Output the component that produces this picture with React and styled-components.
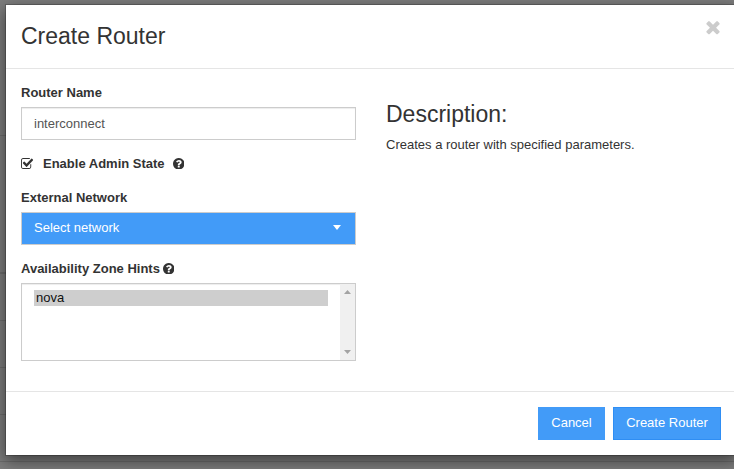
import React from "react";
import styled, { createGlobalStyle } from "styled-components";

const GlobalStyle = createGlobalStyle`
  * { box-sizing: border-box; }
  body {
    margin: 0;
    overflow: hidden;
    color: #333;
    font: 13px/18px "Liberation Sans", Arial, sans-serif;
  }
`;

const Screen = styled.div`
  display: grid;
  width: 734px;
  height: 469px;
  overflow: hidden;
  grid-template: 469px / 734px;
`;

const Backdrop = styled.div`
  grid-area: 1 / 1;
  background: #7d7d7d;
`;

const BackdropRow = styled.div`
  height: ${({ $height }) => $height}px;
  border-bottom: ${({ $thick }) => ($thick ? 2 : 1)}px solid #6d6d6d;
`;

const Modal = styled.section`
  grid-area: 1 / 1;
  position: relative;
  display: flex;
  flex-direction: column;
  width: 732px;
  height: 452px;
  margin: 4px 0 0 5px;
  background: #fff;
  background-clip: padding-box;
  border: 1px solid rgba(0, 0, 0, 0.2);
  box-shadow: 0 5px 15px rgba(0, 0, 0, 0.5);
`;

const Header = styled.header`
  display: flex;
  justify-content: space-between;
  height: 64px;
  padding: 18px 15px 0;
  border-bottom: 1px solid #e5e5e5;
`;

const Title = styled.h3`
  margin: 0;
  font-size: 23px;
  font-weight: 400;
  line-height: 26px;
`;

const CloseButton = styled.button`
  display: flex;
  width: 20px;
  height: 20px;
  margin: -6px -2px 0 0;
  padding: 0;
  border: 0;
  background: none;
  color: #ccc;
`;

const Body = styled.div`
  display: grid;
  grid-template-columns: 335px 1fr;
  column-gap: 30px;
  flex: 1;
  padding: 15px;
`;

const Form = styled.div`
  display: flex;
  flex-direction: column;
`;

const Label = styled.label`
  display: flex;
  align-items: center;
  gap: ${({ $gap }) => $gap || 0}px;
  height: 18px;
  margin-bottom: 5px;
  font-weight: 700;
  white-space: nowrap;
`;

const Field = styled.div`
  margin-bottom: 15px;
`;

const CheckField = styled.div`
  margin-bottom: 11px;
`;

const CheckText = styled.span`
  margin: 0 8px 0 9px;
`;

const Input = styled.input`
  display: block;
  width: 100%;
  height: 33px;
  padding: 6px 12px;
  border: 1px solid #ccc;
  border-radius: 0;
  color: #555;
  font: inherit;
  box-shadow: inset 0 1px 1px rgba(0, 0, 0, 0.075);
  outline: 0;
`;

const Select = styled.div`
  display: flex;
  justify-content: space-between;
  height: 33px;
  padding: 6px 14px 6px 12px;
  border: 1px solid #ccc;
  background: #429bf8;
  color: #fff;
`;

const Arrow = styled.span`
  width: 0;
  height: 0;
  border: solid transparent;
  border-width: ${({ $up, $half, $size }) => ($up ? `0 ${$half}px ${$size}px` : `${$size}px ${$half}px 0`)};
  border-${({ $up }) => ($up ? "bottom" : "top")}-color: ${({ $color }) => $color};
`;

const Caret = styled(Arrow)`
  margin-top: 6px;
`;

const ScrollArrow = styled.svg`
  display: block;
  width: 7px;
  height: 4px;
  fill: #a3a3a3;
`;

const ListBox = styled.div`
  display: flex;
  height: 78px;
  border: 1px solid #ccc;
  box-shadow: inset 0 1px 1px rgba(0, 0, 0, 0.075);
`;

const Options = styled.div`
  flex: 1;
  padding: 6px 12px;
`;

const Option = styled.div`
  height: 16px;
  padding: 0 2px;
  background: #cecece;
  color: #111;
  line-height: 16px;
`;

const Scrollbar = styled.div`
  display: flex;
  flex-direction: column;
  justify-content: space-between;
  align-items: center;
  width: 15px;
  padding: 6px 0;
  background: #f0f0f0;
`;

const Description = styled.div`
  padding-top: 17px;
`;

const DescriptionTitle = styled(Title)`
  margin-bottom: 9px;
`;

const Text = styled.p`
  margin: 0;
`;

const Footer = styled.footer`
  display: flex;
  justify-content: flex-end;
  gap: 8px;
  height: 64px;
  padding: 15px 15px 0;
  border-top: 1px solid #e5e5e5;
`;

const Button = styled.button`
  width: ${({ $width }) => $width}px;
  height: 33px;
  padding: 0 0 2px;
  border: 1px solid ${({ $primary }) => ($primary ? "#2f8ef4" : "#429bf8")};
  background: #429bf8;
  color: #fff;
  font: inherit;
`;

const Icon = styled.svg`
  display: block;
  flex: none;
  width: ${({ $size }) => $size}px;
  height: ${({ $size, $height }) => $height || $size}px;
  fill: currentColor;
`;

const HelpGlyph = styled(Icon)`
  margin-bottom: 1px;
`;

const CheckIcon = () => (
  <Icon $size={13} $height={14} viewBox="64 0 1792 1792" preserveAspectRatio="none">
    <path d="M1472 930v318q0 119-84.5 203.5t-203.5 84.5h-832q-119 0-203.5-84.5t-84.5-203.5v-832q0-119 84.5-203.5t203.5-84.5h832q63 0 117 25 15 7 18 23 3 17-9 29l-49 49q-10 10-23 10-3 0-9-2-23-6-45-6h-832q-66 0-113 47t-47 113v832q0 66 47 113t113 47h832q66 0 113-47t47-113v-254q0-13 9-22l64-64q10-10 23-10 6 0 12 3 20 8 20 29zm231-489l-814 814q-24 24-57 24t-57-24l-430-430q-24-24-24-57t24-57l110-110q24-24 57-24t57 24l263 263 647-647q24-24 57-24t57 24l110 110q24 24 24 57t-24 57z" />
  </Icon>
);

const HelpIcon = () => (
  <HelpGlyph $size={11.5} viewBox="128 128 1536 1536">
    <path d="M1024 1376v-192q0-14-9-23t-23-9h-192q-14 0-23 9t-9 23v192q0 14 9 23t23 9h192q14 0 23-9t9-23zm256-672q0-88-55.5-163t-138.5-116-170-41q-243 0-371 213-15 24 8 42l132 100q7 6 19 6 16 0 25-12 53-68 86-92 34-24 86-24 48 0 85.5 26t37.5 59q0 38-20 61t-68 45q-63 28-115.5 86.5t-52.5 125.5v36q0 14 9 23t23 9h192q14 0 23-9t9-23q0-19 21.5-49.5t54.5-49.5q32-18 49-28.5t46-35 44.5-48 28-60.5 12.5-81zm384 192q0 209-103 385.5t-279.5 279.5-385.5 103-385.5-103-279.5-279.5-103-385.5 103-385.5 279.5-279.5 385.5-103 385.5 103 279.5 279.5 103 385.5z" />
  </HelpGlyph>
);

const CloseIcon = () => (
  <Icon $size={20} viewBox="0 0 1792 1792">
    <path d="M1490 1322q0 40-28 68l-136 136q-28 28-68 28t-68-28l-294-294-294 294q-28 28-68 28t-68-28l-136-136q-28-28-28-68t28-68l294-294-294-294q-28-28-28-68t28-68l136-136q28-28 68-28t68 28l294 294 294-294q28-28 68-28t68 28l136 136q28 28 28 68t-28 68l-294 294 294 294q28 28 28 68z" />
  </Icon>
);

export default function App() {
  return (
    <>
      <GlobalStyle />
      <Screen>
        <Backdrop>
          <BackdropRow $height={136} />
          <BackdropRow $height={138} $thick />
          <BackdropRow $height={47} />
          <BackdropRow $height={47} />
          <BackdropRow $height={47} />
          <BackdropRow $height={47} />
        </Backdrop>
        <Modal role="dialog" aria-label="Create Router">
          <Header>
            <Title>Create Router</Title>
            <CloseButton aria-label="Close">
              <CloseIcon />
            </CloseButton>
          </Header>
          <Body>
            <Form>
              <Field>
                <Label htmlFor="name">Router Name</Label>
                <Input id="name" defaultValue="interconnect" />
              </Field>
              <CheckField>
                <Label>
                  <CheckIcon />
                  <CheckText>Enable Admin State</CheckText>
                  <HelpIcon />
                </Label>
              </CheckField>
              <Field>
                <Label>External Network</Label>
                <Select>
                  Select network
                  <Caret $half={4} $size={5} $color="#fff" />
                </Select>
              </Field>
              <Field>
                <Label $gap={3}>
                  Availability Zone Hints
                  <HelpIcon />
                </Label>
                <ListBox>
                  <Options>
                    <Option>nova</Option>
                  </Options>
                  <Scrollbar>
                    <ScrollArrow viewBox="0 0 7 4">
                      <path d="M0 4L3.5 0L7 4Z" />
                    </ScrollArrow>
                    <ScrollArrow viewBox="0 0 7 4">
                      <path d="M0 0H7L3.5 4Z" />
                    </ScrollArrow>
                  </Scrollbar>
                </ListBox>
              </Field>
            </Form>
            <Description>
              <DescriptionTitle>Description:</DescriptionTitle>
              <Text>Creates a router with specified parameters.</Text>
            </Description>
          </Body>
          <Footer>
            <Button $width={67}>Cancel</Button>
            <Button $width={108} $primary>
              Create Router
            </Button>
          </Footer>
        </Modal>
      </Screen>
    </>
  );
}
